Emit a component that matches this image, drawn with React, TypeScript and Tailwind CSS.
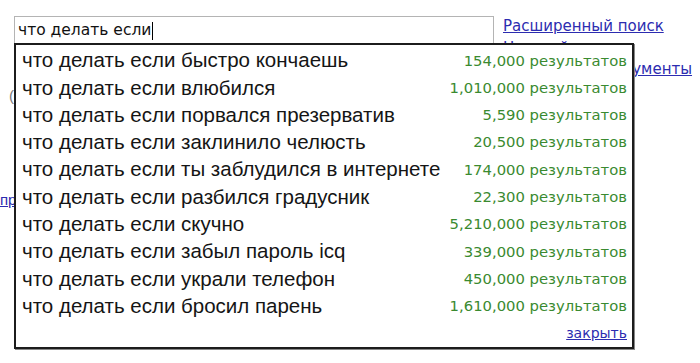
const suggestions = [
  { q: 'что делать если быстро кончаешь', n: '154,000' },
  { q: 'что делать если влюбился', n: '1,010,000' },
  { q: 'что делать если порвался презерватив', n: '5,590' },
  { q: 'что делать если заклинило челюсть', n: '20,500' },
  { q: 'что делать если ты заблудился в интернете', n: '174,000' },
  { q: 'что делать если разбился градусник', n: '22,300' },
  { q: 'что делать если скучно', n: '5,210,000' },
  { q: 'что делать если забыл пароль icq', n: '339,000' },
  { q: 'что делать если украли телефон', n: '450,000' },
  { q: 'что делать если бросил парень', n: '1,610,000' },
];

export default function App() {
  return (
    <div className="relative h-[363px] w-[700px] overflow-hidden bg-white font-['Liberation_Sans',Arial,sans-serif]">
      {/* search row */}
      <div className="flex items-start pl-[14px] pt-[16px]">
        <div className="flex h-[30px] w-[480px] items-center border border-[#b4b4b4] pl-[3px] font-['DejaVu_Sans',Verdana,sans-serif] text-[15.5px] text-[#111]">
          <span>что делать если</span>
          <span className="ml-px inline-block h-[18px] w-px bg-black" />
        </div>
        <div className="ml-[9px] flex flex-col font-['DejaVu_Sans',Verdana,sans-serif] text-[15px] leading-[21.5px] text-[#2c2cb0]">
          <a className="underline" href="#">Расширенный поиск</a>
          <a className="underline" href="#">Настройки</a>
          <a className="underline" href="#">Языковые инструменты</a>
        </div>
      </div>

      {/* page content under the dropdown */}
      <div className="mt-[4px] pl-[9px] text-[15px] text-[#777]">(</div>
      <div className="mt-[82px] text-[15px] text-[#2c2cb0] underline">пр</div>

      {/* suggestions */}
      <div className="absolute left-[14px] top-[43px] h-[306px] w-[620px] border-2 border-[#1c1c1c] bg-white pl-[6px] pr-[5px] pt-[2px] shadow-[1px_1px_0_#888]">
        {suggestions.map((s) => (
          <div key={s.q} className="flex h-[27.3px] items-center justify-between">
            <span className="text-[20.5px] text-[#151515]">{s.q}</span>
            <span className="font-['DejaVu_Sans',Verdana,sans-serif] text-[14.8px] text-[#3a8a30]">
              {s.n} результатов
            </span>
          </div>
        ))}
        <div className="flex h-[27px] items-center justify-end">
          <a className="font-['DejaVu_Sans',Verdana,sans-serif] text-[14px] text-[#2c2cb0] underline" href="#">
            закрыть
          </a>
        </div>
      </div>
    </div>
  );
}
